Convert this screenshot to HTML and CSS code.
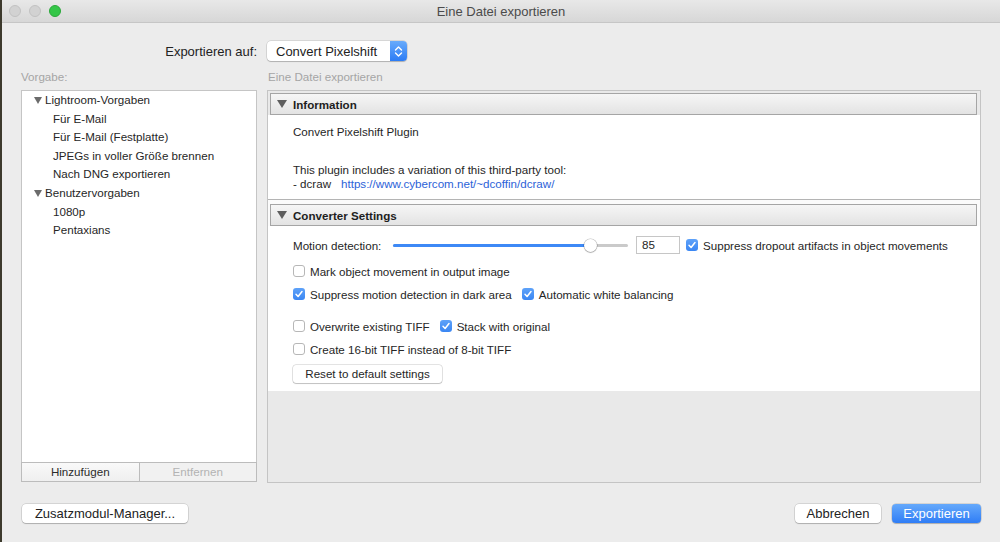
FILE: index.html
```html
<!DOCTYPE html>
<html lang="de">
<head>
<meta charset="utf-8">
<title>Eine Datei exportieren</title>
<link rel="stylesheet" href="styles.css">
</head>
<body>
<div class="window">
  <div class="titlebar">
    <div class="lights">
      <span class="light gray"></span>
      <span class="light gray"></span>
      <span class="light green"></span>
    </div>
    <div class="title">Eine Datei exportieren</div>
    <div></div>
  </div>

  <div class="content">
    <div class="grid toprow">
      <div class="export-label">Exportieren auf:</div>
      <div>
        <div class="popup">
          <span class="popup-text">Convert Pixelshift</span>
          <span class="stepper">
            <svg width="9" height="13" viewBox="0 0 9 13"><path d="M1.5 5 L4.5 2 L7.5 5" fill="none" stroke="#fff" stroke-width="1.4" stroke-linecap="round" stroke-linejoin="round"/><path d="M1.5 8 L4.5 11 L7.5 8" fill="none" stroke="#fff" stroke-width="1.4" stroke-linecap="round" stroke-linejoin="round"/></svg>
          </span>
        </div>
      </div>
    </div>

    <div class="grid labelrow">
      <div class="muted">Vorgabe:</div>
      <div class="muted sublabel">Eine Datei exportieren</div>
    </div>

    <div class="grid mainrow">
      <div class="leftcol">
        <div class="listbox">
          <div class="group"><svg class="tri" width="8" height="7" viewBox="0 0 8 7"><path d="M0 0 H8 L4 7 Z" fill="#6b6b6b"/></svg>Lightroom-Vorgaben</div>
          <div class="item">Für E-Mail</div>
          <div class="item">Für E-Mail (Festplatte)</div>
          <div class="item">JPEGs in voller Größe brennen</div>
          <div class="item">Nach DNG exportieren</div>
          <div class="group"><svg class="tri" width="8" height="7" viewBox="0 0 8 7"><path d="M0 0 H8 L4 7 Z" fill="#6b6b6b"/></svg>Benutzervorgaben</div>
          <div class="item">1080p</div>
          <div class="item">Pentaxians</div>
        </div>
        <div class="listbuttons">
          <div class="lbtn">Hinzufügen</div>
          <div class="lbtn disabled">Entfernen</div>
        </div>
      </div>

      <div class="panel">
        <div class="section">
          <div class="sec-head"><svg class="sec-tri" width="10" height="8" viewBox="0 0 10 8"><path d="M0 0 H10 L5 8 Z" fill="#5e5e5e"/></svg>Information</div>
          <div class="sec-body info">
            <p class="p1">Convert Pixelshift Plugin</p>
            <p class="p2">This plugin includes a variation of this third-party tool:<br>- dcraw<a class="link">https://www.cybercom.net/~dcoffin/dcraw/</a></p>
          </div>
        </div>
        <div class="section second">
          <div class="sec-head"><svg class="sec-tri" width="10" height="8" viewBox="0 0 10 8"><path d="M0 0 H10 L5 8 Z" fill="#5e5e5e"/></svg>Converter Settings</div>
          <div class="sec-body settings">
            <div class="row motion">
              <span class="mlabel">Motion detection:</span>
              <div class="slider">
                <div class="fill" style="width:84%"></div>
                <div class="thumb" style="left:84%"></div>
              </div>
              <div class="numbox">85</div>
              <span class="cb checked"><svg width="12" height="12" viewBox="0 0 12 12"><path d="M3 6.3 L5.1 8.5 L9 3.5" fill="none" stroke="#fff" stroke-width="1.5" stroke-linecap="round" stroke-linejoin="round"/></svg></span>
              <span class="cbl">Suppress dropout artifacts in object movements</span>
            </div>
            <div class="row r2">
              <span class="cb"></span><span class="cbl">Mark object movement in output image</span>
            </div>
            <div class="row r3">
              <span class="cb checked"><svg width="12" height="12" viewBox="0 0 12 12"><path d="M3 6.3 L5.1 8.5 L9 3.5" fill="none" stroke="#fff" stroke-width="1.5" stroke-linecap="round" stroke-linejoin="round"/></svg></span><span class="cbl">Suppress motion detection in dark area</span>
              <span class="cb checked second-cb"><svg width="12" height="12" viewBox="0 0 12 12"><path d="M3 6.3 L5.1 8.5 L9 3.5" fill="none" stroke="#fff" stroke-width="1.5" stroke-linecap="round" stroke-linejoin="round"/></svg></span><span class="cbl">Automatic white balancing</span>
            </div>
            <div class="row r4">
              <span class="cb"></span><span class="cbl">Overwrite existing TIFF</span>
              <span class="cb checked second-cb"><svg width="12" height="12" viewBox="0 0 12 12"><path d="M3 6.3 L5.1 8.5 L9 3.5" fill="none" stroke="#fff" stroke-width="1.5" stroke-linecap="round" stroke-linejoin="round"/></svg></span><span class="cbl">Stack with original</span>
            </div>
            <div class="row r5">
              <span class="cb"></span><span class="cbl">Create 16-bit TIFF instead of 8-bit TIFF</span>
            </div>
            <div class="row r6">
              <div class="smallbtn">Reset to default settings</div>
            </div>
          </div>
        </div>
      </div>
    </div>

    <div class="bottomrow">
      <div class="btn">Zusatzmodul-Manager...</div>
      <div class="spacer"></div>
      <div class="btn cancel">Abbrechen</div>
      <div class="btn primary">Exportieren</div>
    </div>
  </div>
</div>
</body>
</html>
```

FILE: styles.css
```css
* { box-sizing: border-box; }

html, body {
  margin: 0;
  padding: 0;
}

body {
  background: #3d3a2d;
  font-family: "Liberation Sans", Arial, sans-serif;
  color: #262626;
  font-size: 11.6px;
  overflow: hidden;
}

.window {
  margin-left: 2px;
  height: 542px;
  background: #ececec;
  display: flex;
  flex-direction: column;
}

.titlebar {
  height: 23px;
  background: linear-gradient(#e8e8e8, #d7d7d7);
  border-bottom: 1px solid #c6c6c6;
  display: grid;
  grid-template-columns: 1fr auto 1fr;
  align-items: center;
}

.lights {
  display: flex;
  gap: 8px;
  padding-left: 7px;
}

.light {
  width: 12px;
  height: 12px;
  border-radius: 50%;
}

.light.gray {
  background: #d2d2d2;
  border: 1px solid #c2c2c2;
}

.light.green {
  background: #34c648;
  border: 1px solid #2aa83a;
}

.title {
  font-size: 13px;
  color: #4b4b4b;
}

.content {
  padding: 18px 19px 0 19px;
  display: flex;
  flex-direction: column;
}

.grid {
  display: grid;
  grid-template-columns: 236px 714px;
  column-gap: 10px;
}

.toprow {
  height: 20px;
  align-items: center;
}

.export-label {
  text-align: right;
  font-size: 13px;
  color: #222;
}

.popup {
  width: 140px;
  height: 20px;
  background: #fff;
  border-radius: 4px;
  box-shadow: 0 0 0 0.5px rgba(0,0,0,0.18), 0 1px 1px rgba(0,0,0,0.18);
  display: flex;
  align-items: center;
  justify-content: space-between;
}

.popup-text {
  font-size: 13px;
  padding-left: 9px;
  color: #222;
}

.stepper {
  width: 17px;
  height: 20px;
  border-radius: 0 4px 4px 0;
  background: linear-gradient(#68abfb, #2c7cf5);
  display: flex;
  align-items: center;
  justify-content: center;
}

.labelrow {
  height: 29px;
  padding-top: 9px;
  line-height: 14px;
}

.muted {
  color: #a5a5a5;
}

.sublabel {
  padding-left: 1px;
}

.mainrow {
  height: 393px;
}

.leftcol {
  display: flex;
  flex-direction: column;
  height: 393px;
}

.listbox {
  flex: 1;
  background: #fff;
  border: 1px solid #c5c5c5;
  border-bottom: none;
  line-height: 18.6px;
}

.group {
  padding-left: 12px;
  display: flex;
  align-items: center;
}

.tri {
  margin-right: 3px;
}

.item {
  padding-left: 31px;
}

.listbuttons {
  display: flex;
  height: 20px;
  margin-bottom: 1px;
}

.lbtn {
  flex: 1;
  border: 1px solid #bcbcbc;
  background: linear-gradient(#f9f9f9, #efefef);
  text-align: center;
  line-height: 18px;
  color: #2a2a2a;
}

.lbtn + .lbtn {
  border-left: none;
}

.lbtn.disabled {
  color: #b3b3b3;
  background: #f1f1f1;
}

.panel {
  border: 1px solid #c4c4c4;
  background: #e9e9e9;
  height: 393px;
  display: flex;
  flex-direction: column;
}

.section {
  padding-top: 2px;
}

.section.second {
  padding-top: 4px;
  background: #fbfbfb;
}

.sec-head {
  margin: 0 3px 0 2px;
  height: 22px;
  border: 1px solid #a5a5a5;
  background: linear-gradient(#f6f6f6, #e3e3e3);
  display: flex;
  align-items: center;
  font-weight: bold;
  color: #1e1e1e;
  padding-left: 6px;
}

.sec-tri {
  margin-right: 6px;
}

.sec-body {
  background: #fff;
}

.info {
  height: 85px;
  border-bottom: 1px solid #b4b4b4;
  padding: 10px 0 0 25px;
}

.info p {
  margin: 0;
  line-height: 14px;
}

.info .p2 {
  margin-top: 24px;
}

.link {
  color: #2c62d8;
  margin-left: 10px;
}

.settings {
  height: 165px;
  padding: 10px 0 0 25px;
}

.row {
  display: flex;
  align-items: center;
  height: 18px;
}

.r2 { margin-top: 8px; }
.r3 { margin-top: 5px; }
.r4 { margin-top: 14px; }
.r5 { margin-top: 5px; }
.r6 { margin-top: 7px; }

.mlabel {
  width: 100px;
}

.slider {
  position: relative;
  width: 235px;
  height: 3px;
  background: #cacaca;
  border-radius: 2px;
}

.fill {
  height: 3px;
  background: #3d89f6;
  border-radius: 2px;
}

.thumb {
  position: absolute;
  top: -5px;
  width: 13px;
  height: 13px;
  margin-left: -6px;
  border-radius: 50%;
  background: #fff;
  box-shadow: 0 0 0 0.5px rgba(0,0,0,0.25), 0 1px 1px rgba(0,0,0,0.2);
}

.numbox {
  margin-left: 8px;
  width: 44px;
  height: 18px;
  border: 1px solid #c6c6c6;
  background: #fff;
  padding-left: 5px;
  line-height: 16px;
  margin-right: 6px;
}

.cb {
  width: 12px;
  height: 12px;
  border-radius: 3px;
  border: 1px solid #b7b7b7;
  background: #fff;
  flex: none;
  display: flex;
  align-items: center;
  justify-content: center;
}

.cb.checked {
  border: none;
  background: linear-gradient(#5ea2f9, #3a86f3);
}

.cbl {
  margin-left: 5px;
  color: #262626;
}

.second-cb {
  margin-left: 10px;
}

.smallbtn {
  width: 149px;
  height: 18px;
  border-radius: 3px;
  background: #fff;
  box-shadow: 0 0 0 0.5px rgba(0,0,0,0.22), 0 1px 1px rgba(0,0,0,0.15);
  text-align: center;
  line-height: 18px;
}

.bottomrow {
  margin-top: 21px;
  display: flex;
  align-items: center;
  padding-left: 1px;
}

.spacer { flex: 1; }

.btn {
  height: 19px;
  padding: 0 10px;
  border-radius: 4px;
  background: #fff;
  box-shadow: 0 0 0 0.5px rgba(0,0,0,0.2), 0 1px 1px rgba(0,0,0,0.18);
  font-size: 13px;
  line-height: 19px;
  text-align: center;
  color: #222;
}

.btn:first-child {
  width: 166px;
}

.cancel {
  width: 86px;
}

.primary {
  width: 89px;
  margin-left: 11px;
  color: #fff;
  background: linear-gradient(#65a9fb, #2f7df6);
}
```
